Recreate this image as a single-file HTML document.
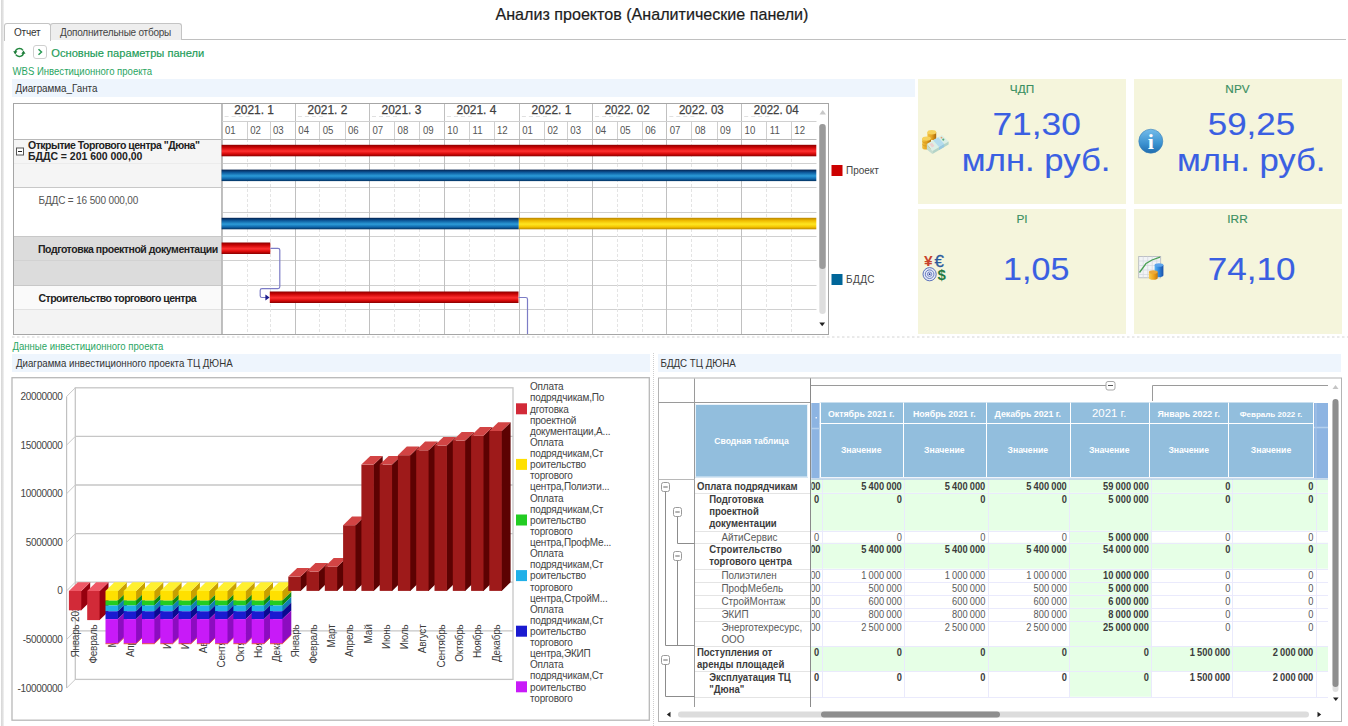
<!DOCTYPE html>
<html><head><meta charset="utf-8"><title>Анализ проектов</title>
<style>
html,body{margin:0;padding:0;}
body{width:1348px;height:726px;position:relative;overflow:hidden;background:#fff;font-family:"Liberation Sans",sans-serif;color:#333;}
.abs{position:absolute;}
.t{position:absolute;white-space:nowrap;line-height:1;}
.grn{color:#2da565;}
.bar{position:absolute;background:#eef5fd;}
.card{position:absolute;background:#f5f5dc;}
.kv{position:absolute;white-space:nowrap;color:#3b5fe0;text-align:center;line-height:1;}
.kl{position:absolute;white-space:nowrap;color:#3a8f62;font-size:11.8px;line-height:1;text-align:center;-webkit-text-stroke:0.15px #3a8f62;}
svg{position:absolute;left:0;top:0;overflow:visible;}
svg text{font-family:"Liberation Sans",sans-serif;}
</style></head><body>

<div class="abs" style="left:1px;top:0;width:3px;height:726px;background:linear-gradient(90deg,#d6d6d6,#e2e2e2 60%,#f4f4f4);"></div>
<div class="t" style="left:495px;top:5.5px;width:314px;text-align:center;font-size:16.1px;color:#1c1c1c;-webkit-text-stroke:0.2px #1c1c1c;">Анализ проектов (Аналитические панели)</div>
<div class="abs" style="left:4px;top:39px;width:1342px;height:1.3px;background:#c0c0c0;"></div>
<div class="abs" style="left:50px;top:23px;width:130px;height:16px;background:#eeeeee;border:1px solid #c4c4c4;border-bottom:none;border-radius:3px 3px 0 0;"></div>
<div class="abs" style="left:4px;top:22.5px;width:45px;height:17.5px;background:#fff;border:1px solid #c4c4c4;border-bottom:none;border-radius:3px 3px 0 0;"></div>
<div class="t" style="left:14px;top:28px;font-size:10px;color:#333;letter-spacing:-0.2px;">Отчет</div>
<div class="t" style="left:60px;top:28px;font-size:10px;color:#444;letter-spacing:-0.23px;">Дополнительные отборы</div>
<svg width="60" height="20" style="left:10px;top:42px;">
  <g fill="none" stroke="#23873f" stroke-width="1.5">
    <path d="M5.3 10 A4.1 3.7 0 0 1 12.9 8.3"/>
    <path d="M13.4 11 A4.1 3.7 0 0 1 5.8 12.7"/>
  </g>
  <path d="M3.2 9.2 L7.4 9.2 L5.2 12.4 Z" fill="#1c7a38"/>
  <path d="M11.3 11.8 L15.5 11.8 L13.5 8.6 Z" fill="#1c7a38"/>
  <rect x="23.5" y="3.5" width="13" height="13" rx="2.5" fill="#fff" stroke="#cfcfcf"/>
  <path d="M28.5 7.2 L31.5 10 L28.5 12.8" fill="none" stroke="#2a9a55" stroke-width="1.5"/>
</svg>
<div class="bar" style="left:12px;top:79px;width:903px;height:18.4px;"></div>
<svg width="1348" height="726">
<defs><linearGradient id="gr" x1="0" y1="0" x2="0" y2="1"><stop offset="0" stop-color="#8a0000"/><stop offset="0.22" stop-color="#c80404"/><stop offset="0.55" stop-color="#ff3030"/><stop offset="0.8" stop-color="#d40808"/><stop offset="1" stop-color="#860000"/></linearGradient><linearGradient id="gb" x1="0" y1="0" x2="0" y2="1"><stop offset="0" stop-color="#03204e"/><stop offset="0.25" stop-color="#0d5a9c"/><stop offset="0.55" stop-color="#2b9bd8"/><stop offset="0.8" stop-color="#0f68ad"/><stop offset="1" stop-color="#03305e"/></linearGradient><linearGradient id="gy" x1="0" y1="0" x2="0" y2="1"><stop offset="0" stop-color="#b88400"/><stop offset="0.25" stop-color="#f0bc00"/><stop offset="0.55" stop-color="#ffe620"/><stop offset="0.8" stop-color="#f5c400"/><stop offset="1" stop-color="#b88400"/></linearGradient></defs>
<rect x="13" y="139" width="208.5" height="48.5" fill="#f5f5f5"/>
<rect x="13" y="236.5" width="208.5" height="49" fill="#dcdcdc"/>
<rect x="13" y="286" width="208.5" height="24" fill="#fafafa"/><rect x="13" y="310" width="208.5" height="24" fill="#f3f3f3"/>
<line x1="221.6" y1="163.5" x2="816.5" y2="163.5" stroke="#d0d0d0" stroke-width="1"/>
<line x1="221.6" y1="187.5" x2="816.5" y2="187.5" stroke="#d0d0d0" stroke-width="1"/>
<line x1="221.6" y1="212.5" x2="816.5" y2="212.5" stroke="#d0d0d0" stroke-width="1"/>
<line x1="221.6" y1="236.5" x2="816.5" y2="236.5" stroke="#d0d0d0" stroke-width="1"/>
<line x1="221.6" y1="260.5" x2="816.5" y2="260.5" stroke="#d0d0d0" stroke-width="1"/>
<line x1="221.6" y1="285.5" x2="816.5" y2="285.5" stroke="#d0d0d0" stroke-width="1"/>
<line x1="221.6" y1="309.5" x2="816.5" y2="309.5" stroke="#d0d0d0" stroke-width="1"/>
<line x1="13" y1="187.5" x2="221.5" y2="187.5" stroke="#c8c8c8"/>
<line x1="13" y1="236.5" x2="221.5" y2="236.5" stroke="#c8c8c8"/>
<line x1="13" y1="285.5" x2="221.5" y2="285.5" stroke="#c8c8c8"/>
<line x1="13" y1="163.5" x2="221.5" y2="163.5" stroke="#ececec"/>
<line x1="13" y1="260.5" x2="221.5" y2="260.5" stroke="#d2d2d2"/>
<line x1="13" y1="309.5" x2="221.5" y2="309.5" stroke="#e2e2e2"/>
<line x1="222.5" y1="103" x2="222.5" y2="334" stroke="#c0c0c0"/>
<line x1="247.5" y1="121" x2="247.5" y2="139" stroke="#cfcfcf"/>
<line x1="247.5" y1="139" x2="247.5" y2="334" stroke="#e4e4e4" stroke-dasharray="3 2"/>
<line x1="270.5" y1="121" x2="270.5" y2="139" stroke="#cfcfcf"/>
<line x1="270.5" y1="139" x2="270.5" y2="334" stroke="#e4e4e4" stroke-dasharray="3 2"/>
<line x1="295.5" y1="103" x2="295.5" y2="334" stroke="#c0c0c0"/>
<line x1="319.5" y1="121" x2="319.5" y2="139" stroke="#cfcfcf"/>
<line x1="319.5" y1="139" x2="319.5" y2="334" stroke="#e4e4e4" stroke-dasharray="3 2"/>
<line x1="345.5" y1="121" x2="345.5" y2="139" stroke="#cfcfcf"/>
<line x1="345.5" y1="139" x2="345.5" y2="334" stroke="#e4e4e4" stroke-dasharray="3 2"/>
<line x1="369.5" y1="103" x2="369.5" y2="334" stroke="#c0c0c0"/>
<line x1="394.5" y1="121" x2="394.5" y2="139" stroke="#cfcfcf"/>
<line x1="394.5" y1="139" x2="394.5" y2="334" stroke="#e4e4e4" stroke-dasharray="3 2"/>
<line x1="419.5" y1="121" x2="419.5" y2="139" stroke="#cfcfcf"/>
<line x1="419.5" y1="139" x2="419.5" y2="334" stroke="#e4e4e4" stroke-dasharray="3 2"/>
<line x1="444.5" y1="103" x2="444.5" y2="334" stroke="#c0c0c0"/>
<line x1="469.5" y1="121" x2="469.5" y2="139" stroke="#cfcfcf"/>
<line x1="469.5" y1="139" x2="469.5" y2="334" stroke="#e4e4e4" stroke-dasharray="3 2"/>
<line x1="494.5" y1="121" x2="494.5" y2="139" stroke="#cfcfcf"/>
<line x1="494.5" y1="139" x2="494.5" y2="334" stroke="#e4e4e4" stroke-dasharray="3 2"/>
<line x1="519.5" y1="103" x2="519.5" y2="334" stroke="#c0c0c0"/>
<line x1="544.5" y1="121" x2="544.5" y2="139" stroke="#cfcfcf"/>
<line x1="544.5" y1="139" x2="544.5" y2="334" stroke="#e4e4e4" stroke-dasharray="3 2"/>
<line x1="567.5" y1="121" x2="567.5" y2="139" stroke="#cfcfcf"/>
<line x1="567.5" y1="139" x2="567.5" y2="334" stroke="#e4e4e4" stroke-dasharray="3 2"/>
<line x1="592.5" y1="103" x2="592.5" y2="334" stroke="#c0c0c0"/>
<line x1="617.5" y1="121" x2="617.5" y2="139" stroke="#cfcfcf"/>
<line x1="617.5" y1="139" x2="617.5" y2="334" stroke="#e4e4e4" stroke-dasharray="3 2"/>
<line x1="642.5" y1="121" x2="642.5" y2="139" stroke="#cfcfcf"/>
<line x1="642.5" y1="139" x2="642.5" y2="334" stroke="#e4e4e4" stroke-dasharray="3 2"/>
<line x1="666.5" y1="103" x2="666.5" y2="334" stroke="#c0c0c0"/>
<line x1="691.5" y1="121" x2="691.5" y2="139" stroke="#cfcfcf"/>
<line x1="691.5" y1="139" x2="691.5" y2="334" stroke="#e4e4e4" stroke-dasharray="3 2"/>
<line x1="717.5" y1="121" x2="717.5" y2="139" stroke="#cfcfcf"/>
<line x1="717.5" y1="139" x2="717.5" y2="334" stroke="#e4e4e4" stroke-dasharray="3 2"/>
<line x1="741.5" y1="103" x2="741.5" y2="334" stroke="#c0c0c0"/>
<line x1="766.5" y1="121" x2="766.5" y2="139" stroke="#cfcfcf"/>
<line x1="766.5" y1="139" x2="766.5" y2="334" stroke="#e4e4e4" stroke-dasharray="3 2"/>
<line x1="791.5" y1="121" x2="791.5" y2="139" stroke="#cfcfcf"/>
<line x1="791.5" y1="139" x2="791.5" y2="334" stroke="#e4e4e4" stroke-dasharray="3 2"/>
<line x1="221.5" y1="121.5" x2="816.5" y2="121.5" stroke="#d0d0d0"/>
<line x1="13" y1="139.5" x2="816.5" y2="139.5" stroke="#b8b8b8"/>
<rect x="221.0" y="103.5" width="1" height="231" fill="#bdbdbd"/>
<text x="234.2" y="114.2" font-size="12" fill="#404040" stroke="#404040" stroke-width="0.25" textLength="39.8" lengthAdjust="spacingAndGlyphs">2021. 1</text>
<line x1="224.6" y1="116.5" x2="251.6" y2="116.5" stroke="#e0e0e0" stroke-dasharray="4 3"/>
<text x="307.5" y="114.2" font-size="12" fill="#404040" stroke="#404040" stroke-width="0.25" textLength="39.8" lengthAdjust="spacingAndGlyphs">2021. 2</text>
<line x1="297.9" y1="116.5" x2="324.9" y2="116.5" stroke="#e0e0e0" stroke-dasharray="4 3"/>
<text x="381.6" y="114.2" font-size="12" fill="#404040" stroke="#404040" stroke-width="0.25" textLength="39.8" lengthAdjust="spacingAndGlyphs">2021. 3</text>
<line x1="372.0" y1="116.5" x2="399.0" y2="116.5" stroke="#e0e0e0" stroke-dasharray="4 3"/>
<text x="456.5" y="114.2" font-size="12" fill="#404040" stroke="#404040" stroke-width="0.25" textLength="39.8" lengthAdjust="spacingAndGlyphs">2021. 4</text>
<line x1="446.9" y1="116.5" x2="473.9" y2="116.5" stroke="#e0e0e0" stroke-dasharray="4 3"/>
<text x="531.5" y="114.2" font-size="12" fill="#404040" stroke="#404040" stroke-width="0.25" textLength="39.8" lengthAdjust="spacingAndGlyphs">2022. 1</text>
<line x1="521.9" y1="116.5" x2="548.9" y2="116.5" stroke="#e0e0e0" stroke-dasharray="4 3"/>
<text x="604.7" y="114.2" font-size="12" fill="#404040" stroke="#404040" stroke-width="0.25" textLength="44.9" lengthAdjust="spacingAndGlyphs">2022. 02</text>
<line x1="595.1" y1="116.5" x2="622.1" y2="116.5" stroke="#e0e0e0" stroke-dasharray="4 3"/>
<text x="678.9" y="114.2" font-size="12" fill="#404040" stroke="#404040" stroke-width="0.25" textLength="44.9" lengthAdjust="spacingAndGlyphs">2022. 03</text>
<line x1="669.3" y1="116.5" x2="696.3" y2="116.5" stroke="#e0e0e0" stroke-dasharray="4 3"/>
<text x="753.8" y="114.2" font-size="12" fill="#404040" stroke="#404040" stroke-width="0.25" textLength="44.9" lengthAdjust="spacingAndGlyphs">2022. 04</text>
<line x1="744.2" y1="116.5" x2="771.2" y2="116.5" stroke="#e0e0e0" stroke-dasharray="4 3"/>
<text transform="translate(225.0,133.7) scale(0.86,1)" font-size="11.2" fill="#555">01</text>
<text transform="translate(250.2,133.7) scale(0.86,1)" font-size="11.2" fill="#555">02</text>
<text transform="translate(273.0,133.7) scale(0.86,1)" font-size="11.2" fill="#555">03</text>
<text transform="translate(298.3,133.7) scale(0.86,1)" font-size="11.2" fill="#555">04</text>
<text transform="translate(322.7,133.7) scale(0.86,1)" font-size="11.2" fill="#555">05</text>
<text transform="translate(348.0,133.7) scale(0.86,1)" font-size="11.2" fill="#555">06</text>
<text transform="translate(372.4,133.7) scale(0.86,1)" font-size="11.2" fill="#555">07</text>
<text transform="translate(397.6,133.7) scale(0.86,1)" font-size="11.2" fill="#555">08</text>
<text transform="translate(422.9,133.7) scale(0.86,1)" font-size="11.2" fill="#555">09</text>
<text transform="translate(447.3,133.7) scale(0.86,1)" font-size="11.2" fill="#555">10</text>
<text transform="translate(472.6,133.7) scale(0.86,1)" font-size="11.2" fill="#555">11</text>
<text transform="translate(497.0,133.7) scale(0.86,1)" font-size="11.2" fill="#555">12</text>
<text transform="translate(522.2,133.7) scale(0.86,1)" font-size="11.2" fill="#555">01</text>
<text transform="translate(547.5,133.7) scale(0.86,1)" font-size="11.2" fill="#555">02</text>
<text transform="translate(570.3,133.7) scale(0.86,1)" font-size="11.2" fill="#555">03</text>
<text transform="translate(595.5,133.7) scale(0.86,1)" font-size="11.2" fill="#555">04</text>
<text transform="translate(620.0,133.7) scale(0.86,1)" font-size="11.2" fill="#555">05</text>
<text transform="translate(645.2,133.7) scale(0.86,1)" font-size="11.2" fill="#555">06</text>
<text transform="translate(669.7,133.7) scale(0.86,1)" font-size="11.2" fill="#555">07</text>
<text transform="translate(694.9,133.7) scale(0.86,1)" font-size="11.2" fill="#555">08</text>
<text transform="translate(720.1,133.7) scale(0.86,1)" font-size="11.2" fill="#555">09</text>
<text transform="translate(744.6,133.7) scale(0.86,1)" font-size="11.2" fill="#555">10</text>
<text transform="translate(769.8,133.7) scale(0.86,1)" font-size="11.2" fill="#555">11</text>
<text transform="translate(794.3,133.7) scale(0.86,1)" font-size="11.2" fill="#555">12</text>
<rect x="221.6" y="144.8" width="594.7" height="11.5" fill="url(#gr)"/>
<rect x="221.6" y="169.6" width="594.7" height="11.5" fill="url(#gb)"/>
<rect x="221.6" y="217.8" width="297.2" height="11.5" fill="url(#gb)"/>
<rect x="518.8" y="217.8" width="297.5" height="11.5" fill="url(#gy)"/>
<rect x="221.6" y="242.5" width="48.7" height="11.5" fill="url(#gr)"/>
<rect x="269.8" y="291.5" width="248.7" height="11.5" fill="url(#gr)"/>
<path d="M270.3 248.3 H278 Q279.8 248.3 279.8 250 V286.8 Q279.8 288.6 278 288.6 H262 Q260.2 288.6 260.2 290.4 V295.7 Q260.2 297.5 262 297.5 H266" fill="none" stroke="#7c7cc6" stroke-width="1.2"/>
<path d="M265.4 294.6 L269.6 297.5 L265.4 300.4 Z" fill="#1c1c8c"/>
<path d="M518.5 297.5 H525.7 Q527.5 297.5 527.5 299.3 V334" fill="none" stroke="#7c7cc6" stroke-width="1.2"/>
<rect x="13.5" y="103.5" width="815" height="231" fill="none" stroke="#a6a6a6"/>
<rect x="819.3" y="124" width="6.4" height="190" rx="3.2" fill="#dedede"/>
<rect x="819.3" y="124" width="6.4" height="145" rx="3.2" fill="#9a9a9a"/>
<path d="M819.5 114.5 L822.7 110 L826 114.5 Z" fill="#c8c8c8"/>
<path d="M819.3 322.5 L825.1 322.5 L822.2 326.3 Z" fill="#222"/>
<rect x="16.5" y="148" width="7" height="7" fill="#fff" stroke="#555"/>
<line x1="18" y1="151.5" x2="22" y2="151.5" stroke="#222" stroke-width="1"/>
<rect x="831.5" y="165" width="11" height="11" fill="#cc0000"/>
<rect x="831.5" y="274" width="11" height="11" fill="#006699"/>
</svg>
<div class="t" style="left:28px;top:140px;font-size:10.5px;font-weight:bold;color:#222;letter-spacing:-0.5px;line-height:11px;">Открытие Торгового центра "Дюна"<br><span style="letter-spacing:-0.03px">БДДС = 201 600 000,00</span></div>
<div class="t" style="left:38.5px;top:195.5px;font-size:10px;color:#555;letter-spacing:-0.15px;">БДДС = 16 500 000,00</div>
<div class="t" style="left:38px;top:244px;font-size:10.5px;font-weight:bold;color:#222;letter-spacing:-0.45px;">Подготовка проектной документации</div>
<div class="t" style="left:38.5px;top:293px;font-size:10.5px;font-weight:bold;color:#222;letter-spacing:-0.53px;">Строительство торгового центра</div>
<div class="t" style="left:846px;top:166px;font-size:10px;color:#444;letter-spacing:0px;">Проект</div>
<div class="t" style="left:846px;top:275px;font-size:10px;color:#444;letter-spacing:0.4px;">БДДС</div>

<div class="card" style="left:918px;top:79px;width:208px;height:124.5px;"></div>
<div class="card" style="left:1133.5px;top:79px;width:208px;height:124.5px;"></div>
<div class="card" style="left:918px;top:209px;width:208px;height:124.5px;"></div>
<div class="card" style="left:1133.5px;top:209px;width:208px;height:124.5px;"></div>
<div class="kl" style="left:972px;width:100px;top:84.2px;">ЧДП</div>
<div class="kl" style="left:1187.5px;width:100px;top:84.2px;">NPV</div>
<div class="kl" style="left:972px;width:100px;top:214.1px;">PI</div>
<div class="kl" style="left:1187.5px;width:100px;top:214.1px;">IRR</div>
<svg width="1348" height="726">
<g fill="#3a5fe2" stroke="#3a5fe2" stroke-width="0.12" font-size="31.4" text-anchor="middle">
  <text transform="translate(1036.6,135) scale(1.125,1)">71,30</text>
  <text transform="translate(1036.1,171.2) scale(1.104,1)">млн. руб.</text>
  <text transform="translate(1251.4,135) scale(1.112,1)">59,25</text>
  <text transform="translate(1251.2,171.2) scale(1.104,1)">млн. руб.</text>
  <text transform="translate(1036.2,279.8) scale(1.085,1)">1,05</text>
  <text transform="translate(1251.6,279.8) scale(1.118,1)">74,10</text>
</g>
<!-- money icon -->
<defs>
<linearGradient id="gold" x1="0" y1="0" x2="1" y2="0"><stop offset="0" stop-color="#f0c040"/><stop offset="0.5" stop-color="#e4a422"/><stop offset="1" stop-color="#a8660a"/></linearGradient>
</defs>
<g>
  <!-- back coin stack -->
  <path d="M927.4 132.3 V140 H936.2 V132.3 Z" fill="url(#gold)"/>
  <ellipse cx="931.8" cy="132.3" rx="4.4" ry="2.2" fill="#f6d25c"/>
  <!-- front coin stack -->
  <path d="M922.2 138.6 V147.4 A4.4 2.2 0 0 0 931 147.4 V138.6 Z" fill="url(#gold)"/>
  <ellipse cx="926.6" cy="138.6" rx="4.4" ry="2.2" fill="#f6d25c"/>
  <path d="M922.4 141.5 A4.4 2.2 0 0 0 930.8 141.5 M922.4 144.5 A4.4 2.2 0 0 0 930.8 144.5" fill="none" stroke="#c88c18" stroke-width="0.5"/>
  <!-- banknotes -->
  <path d="M926.8 144 L942 135 L948.6 141.4 L932.4 151 Z" fill="#dcefe6"/>
  <path d="M926.8 144 L932.4 151 V154 L926.8 149.4 Z" fill="#c4dcd0"/>
  <path d="M932.4 151 L948.6 141.4 V144.4 L932.4 154 Z" fill="#b4d4c8"/>
  <path d="M933.2 140.2 L938.2 137.2 L944.2 144 L939 147.1 Z" fill="#b4dcee"/>
  <path d="M939 147.1 L944.2 144 V147 L939 150.1 Z" fill="#98c8e0"/>
  <path d="M929.5 144.2 L932 142.8 L934.5 146 L932 147.5 Z" fill="#ecd0d0"/>
  <circle cx="943.3" cy="139.6" r="1.1" fill="#58a878"/>
  <circle cx="941.5" cy="137.6" r="0.9" fill="#e0a070"/>
</g>
<!-- info icon -->
<defs><linearGradient id="ig" x1="0" y1="0" x2="0" y2="1"><stop offset="0" stop-color="#74bcea"/><stop offset="0.6" stop-color="#3c92d0"/><stop offset="1" stop-color="#1f6cae"/></linearGradient></defs>
<circle cx="1150.8" cy="141.2" r="12" fill="url(#ig)" stroke="#3a80b8" stroke-width="0.6"/>
<text x="1150.9" y="149.2" style="font-family:'Liberation Serif',serif;font-weight:bold" font-size="22" fill="#fff" text-anchor="middle">i</text>
<!-- currency icon -->
<g font-family="Liberation Sans" font-weight="bold">
  <text x="924" y="265.9" font-size="15.5" fill="#c8422c">¥</text>
  <text x="934.4" y="266.6" font-size="17" font-weight="normal" stroke="#2a5a9c" stroke-width="0.3" fill="#2a5a9c">€</text>
  <text x="937.6" y="280.2" font-size="15" fill="#1f7a42">$</text>
</g>
<circle cx="929.6" cy="274.2" r="6.6" fill="#e4e9f6" stroke="#4a62b4" stroke-width="0.9"/>
<circle cx="929.6" cy="274.2" r="4.3" fill="none" stroke="#4a62b4" stroke-width="0.8"/>
<circle cx="929.6" cy="274.2" r="2.2" fill="none" stroke="#4a62b4" stroke-width="0.7"/>
<circle cx="929.6" cy="274.2" r="0.9" fill="#2a3c94"/>
<!-- chart icon -->
<defs>
<linearGradient id="cyb" x1="0" y1="0" x2="1" y2="0"><stop offset="0" stop-color="#5cb4f0"/><stop offset="0.5" stop-color="#2e84dc"/><stop offset="1" stop-color="#1a50a8"/></linearGradient>
<linearGradient id="cyy" x1="0" y1="0" x2="1" y2="0"><stop offset="0" stop-color="#f8cc50"/><stop offset="0.5" stop-color="#f0a820"/><stop offset="1" stop-color="#c87808"/></linearGradient>
</defs>
<g>
  <rect x="1138.7" y="256.5" width="22" height="21.3" fill="#f2f4f6" stroke="#b0b4bc" stroke-width="0.8"/>
  <path d="M1138.7 261 H1160.7 M1138.7 265.5 H1160.7 M1138.7 270 H1160.7 M1138.7 274.5 H1160.7 M1143.2 256.5 V277.8 M1147.7 256.5 V277.8 M1152.2 256.5 V277.8 M1156.7 256.5 V277.8" stroke="#d4d8e0" stroke-width="0.7"/>
  <path d="M1139.5 272.5 L1146 263.5 L1152 260 L1160 257.2" fill="none" stroke="#4aa052" stroke-width="1.3"/>
  <!-- blue cylinder -->
  <path d="M1154.6 265 V275.2 A4.4 1.8 0 0 0 1163.4 275.2 V265 Z" fill="url(#cyb)"/>
  <ellipse cx="1159" cy="265" rx="4.4" ry="1.8" fill="#5ca4ec"/>
  <!-- yellow cylinder -->
  <path d="M1148.9 272 V277.9 A4.4 1.8 0 0 0 1157.7 277.9 V272 Z" fill="url(#cyy)"/>
  <ellipse cx="1153.3" cy="272" rx="4.4" ry="1.8" fill="#eca838"/>
</g>
</svg>

<svg width="1348" height="726"><line x1="12" y1="337" x2="1348" y2="337" stroke="#d4d4d4" stroke-dasharray="2.5 2.5"/></svg>
<div class="bar" style="left:12px;top:354px;width:638px;height:18px;"></div>
<div class="abs" style="left:653px;top:353px;width:0;height:373px;border-left:1px dotted #cfcfcf;"></div>
<div class="bar" style="left:657.5px;top:354px;width:683px;height:18px;"></div>

<svg width="1348" height="726">
<g font-size="11.4">
<text transform="translate(51.3,56.8) scale(0.975,1)" fill="#229c58" stroke="#229c58" stroke-width="0.18">Основные параметры панели</text>
</g>
<g fill="#2aa562">
<text transform="translate(12.5,74.8) scale(0.87,1)" font-size="11">WBS Инвестиционного проекта</text>
<text transform="translate(12.5,349.6) scale(0.87,1)" font-size="11">Данные инвестиционного проекта</text>
</g>
<g fill="#333">
<text transform="translate(15.5,92.3) scale(0.885,1)" font-size="11.1">Диаграмма_Ганта</text>
<text transform="translate(16,366.9) scale(0.875,1)" font-size="11.1">Диаграмма инвестиционного проекта ТЦ ДЮНА</text>
<text transform="translate(660.5,366.7) scale(0.88,1)" font-size="11.1">БДДС ТЦ ДЮНА</text>
</g>
</svg>
<svg width="1348" height="726">
<rect x="12" y="377.7" width="637.3" height="342.5" fill="#fff" stroke="#b8b8b8" stroke-width="1.3"/>
<rect x="75.3" y="387.8" width="437.7" height="291.6" fill="#fff" stroke="#c6c6c6" stroke-width="1.3"/>
<line x1="75.3" y1="436.4" x2="513.0" y2="436.4" stroke="#c6c6c6" stroke-width="1.3"/>
<line x1="75.3" y1="485.0" x2="513.0" y2="485.0" stroke="#c6c6c6" stroke-width="1.3"/>
<line x1="75.3" y1="533.6" x2="513.0" y2="533.6" stroke="#c6c6c6" stroke-width="1.3"/>
<line x1="75.3" y1="582.2" x2="513.0" y2="582.2" stroke="#c6c6c6" stroke-width="1.3"/>
<line x1="75.3" y1="630.8" x2="513.0" y2="630.8" stroke="#c6c6c6" stroke-width="1.3"/>
<line x1="66.6" y1="396.5" x2="66.6" y2="688.1" stroke="#c0c0c0" stroke-width="1.2"/>
<line x1="66.6" y1="396.5" x2="75.3" y2="387.8" stroke="#c8c8c8"/>
<text x="62.5" y="400.0" font-size="10" fill="#444" text-anchor="end" letter-spacing="-0.3">20000000</text>
<line x1="66.6" y1="445.1" x2="75.3" y2="436.4" stroke="#c8c8c8"/>
<text x="62.5" y="448.6" font-size="10" fill="#444" text-anchor="end" letter-spacing="-0.3">15000000</text>
<line x1="66.6" y1="493.7" x2="75.3" y2="485.0" stroke="#c8c8c8"/>
<text x="62.5" y="497.2" font-size="10" fill="#444" text-anchor="end" letter-spacing="-0.3">10000000</text>
<line x1="66.6" y1="542.3" x2="75.3" y2="533.6" stroke="#c8c8c8"/>
<text x="62.5" y="545.8" font-size="10" fill="#444" text-anchor="end" letter-spacing="-0.3">5000000</text>
<line x1="66.6" y1="590.9" x2="75.3" y2="582.2" stroke="#c8c8c8"/>
<text x="62.5" y="594.4" font-size="10" fill="#444" text-anchor="end" letter-spacing="-0.3">0</text>
<line x1="66.6" y1="639.5" x2="75.3" y2="630.8" stroke="#c8c8c8"/>
<text x="62.5" y="643.0" font-size="10" fill="#444" text-anchor="end" letter-spacing="-0.3">-5000000</text>
<line x1="66.6" y1="688.1" x2="75.3" y2="679.4" stroke="#c8c8c8"/>
<text x="62.5" y="691.6" font-size="10" fill="#444" text-anchor="end" letter-spacing="-0.3">-10000000</text>
<text transform="translate(79.1,624.5) rotate(-90)" font-size="10" fill="#3c3c3c" text-anchor="end" letter-spacing="-0.22">Январь</text>
<text transform="translate(79.1,624.5) rotate(-90)" font-size="10" fill="#3c3c3c" text-anchor="start" letter-spacing="-0.22">&#160;2021</text>
<text transform="translate(97.4,624.5) rotate(-90)" font-size="10" fill="#3c3c3c" text-anchor="end" letter-spacing="-0.22">Февраль</text>
<text transform="translate(115.7,624.5) rotate(-90)" font-size="10" fill="#3c3c3c" text-anchor="end" letter-spacing="-0.22">Март</text>
<text transform="translate(133.9,624.5) rotate(-90)" font-size="10" fill="#3c3c3c" text-anchor="end" letter-spacing="-0.22">Апрель</text>
<text transform="translate(152.2,624.5) rotate(-90)" font-size="10" fill="#3c3c3c" text-anchor="end" letter-spacing="-0.22">Май</text>
<text transform="translate(170.5,624.5) rotate(-90)" font-size="10" fill="#3c3c3c" text-anchor="end" letter-spacing="-0.22">Июнь</text>
<text transform="translate(188.8,624.5) rotate(-90)" font-size="10" fill="#3c3c3c" text-anchor="end" letter-spacing="-0.22">Июль</text>
<text transform="translate(207.1,624.5) rotate(-90)" font-size="10" fill="#3c3c3c" text-anchor="end" letter-spacing="-0.22">Август</text>
<text transform="translate(225.3,624.5) rotate(-90)" font-size="10" fill="#3c3c3c" text-anchor="end" letter-spacing="-0.22">Сентябрь</text>
<text transform="translate(243.6,624.5) rotate(-90)" font-size="10" fill="#3c3c3c" text-anchor="end" letter-spacing="-0.22">Октябрь</text>
<text transform="translate(261.9,624.5) rotate(-90)" font-size="10" fill="#3c3c3c" text-anchor="end" letter-spacing="-0.22">Ноябрь</text>
<text transform="translate(280.2,624.5) rotate(-90)" font-size="10" fill="#3c3c3c" text-anchor="end" letter-spacing="-0.22">Декабрь</text>
<text transform="translate(298.5,624.5) rotate(-90)" font-size="10" fill="#3c3c3c" text-anchor="end" letter-spacing="-0.22">Январь</text>
<clipPath id="sl"><rect x="292" y="590" width="2.6" height="32"/></clipPath>
<g clip-path="url(#sl)"><text transform="translate(294.6,593.5) rotate(-90)" font-size="10.5" fill="#777" text-anchor="start" letter-spacing="-0.25">&#160;2022</text></g>
<text transform="translate(316.7,624.5) rotate(-90)" font-size="10" fill="#3c3c3c" text-anchor="end" letter-spacing="-0.22">Февраль</text>
<text transform="translate(335.0,624.5) rotate(-90)" font-size="10" fill="#3c3c3c" text-anchor="end" letter-spacing="-0.22">Март</text>
<text transform="translate(353.3,624.5) rotate(-90)" font-size="10" fill="#3c3c3c" text-anchor="end" letter-spacing="-0.22">Апрель</text>
<text transform="translate(371.6,624.5) rotate(-90)" font-size="10" fill="#3c3c3c" text-anchor="end" letter-spacing="-0.22">Май</text>
<text transform="translate(389.9,624.5) rotate(-90)" font-size="10" fill="#3c3c3c" text-anchor="end" letter-spacing="-0.22">Июнь</text>
<text transform="translate(408.1,624.5) rotate(-90)" font-size="10" fill="#3c3c3c" text-anchor="end" letter-spacing="-0.22">Июль</text>
<text transform="translate(426.4,624.5) rotate(-90)" font-size="10" fill="#3c3c3c" text-anchor="end" letter-spacing="-0.22">Август</text>
<text transform="translate(444.7,624.5) rotate(-90)" font-size="10" fill="#3c3c3c" text-anchor="end" letter-spacing="-0.22">Сентябрь</text>
<text transform="translate(463.0,624.5) rotate(-90)" font-size="10" fill="#3c3c3c" text-anchor="end" letter-spacing="-0.22">Октябрь</text>
<text transform="translate(481.3,624.5) rotate(-90)" font-size="10" fill="#3c3c3c" text-anchor="end" letter-spacing="-0.22">Ноябрь</text>
<text transform="translate(499.5,624.5) rotate(-90)" font-size="10" fill="#3c3c3c" text-anchor="end" letter-spacing="-0.22">Декабрь</text>
<path d="M80.7 590.9 L81.3 590.9 L90.2 582.2 L90.2 601.6 L81.3 610.3 L80.7 610.3 Z" fill="#96000e"/>
<rect x="68.9" y="590.9" width="12.4" height="19.4" fill="#d22a38"/>
<path d="M68.9 590.9 L77.8 582.2 L90.2 582.2 L81.3 590.9 Z" fill="#ef5866"/>
<path d="M99.0 590.9 L99.6 590.9 L108.5 582.2 L108.5 611.4 L99.6 620.1 L99.0 620.1 Z" fill="#96000e"/>
<rect x="87.2" y="590.9" width="12.4" height="29.2" fill="#d22a38"/>
<path d="M87.2 590.9 L96.1 582.2 L108.5 582.2 L99.6 590.9 Z" fill="#ef5866"/>
<path d="M117.3 590.9 L117.9 590.9 L126.8 582.2 L126.8 591.9 L117.9 600.6 L117.3 600.6 Z" fill="#c8a000"/>
<rect x="105.5" y="590.9" width="12.4" height="9.7" fill="#ffe000"/>
<path d="M105.5 590.9 L114.4 582.2 L126.8 582.2 L117.9 590.9 Z" fill="#fff030"/>
<path d="M117.3 600.6 L117.9 600.6 L126.8 591.9 L126.8 596.8 L117.9 605.5 L117.3 605.5 Z" fill="#108c10"/>
<rect x="105.5" y="600.6" width="12.4" height="4.9" fill="#22cc22"/>
<path d="M117.3 605.5 L117.9 605.5 L126.8 596.8 L126.8 602.6 L117.9 611.3 L117.3 611.3 Z" fill="#1080b0"/>
<rect x="105.5" y="605.5" width="12.4" height="5.8" fill="#20b0e8"/>
<path d="M117.3 611.3 L117.9 611.3 L126.8 602.6 L126.8 610.4 L117.9 619.1 L117.3 619.1 Z" fill="#0a0a90"/>
<rect x="105.5" y="611.3" width="12.4" height="7.8" fill="#1a1ad0"/>
<path d="M117.3 619.1 L117.9 619.1 L126.8 610.4 L126.8 634.7 L117.9 643.4 L117.3 643.4 Z" fill="#8c0cc0"/>
<rect x="105.5" y="619.1" width="12.4" height="24.3" fill="#c81af8"/>
<path d="M105.5 643.7 H117.9 L126.8 635.0" fill="none" stroke="#e23a3a" stroke-width="0.9"/>
<path d="M135.5 590.9 L136.1 590.9 L145.0 582.2 L145.0 591.9 L136.1 600.6 L135.5 600.6 Z" fill="#c8a000"/>
<rect x="123.7" y="590.9" width="12.4" height="9.7" fill="#ffe000"/>
<path d="M123.7 590.9 L132.6 582.2 L145.0 582.2 L136.1 590.9 Z" fill="#fff030"/>
<path d="M135.5 600.6 L136.1 600.6 L145.0 591.9 L145.0 596.8 L136.1 605.5 L135.5 605.5 Z" fill="#108c10"/>
<rect x="123.7" y="600.6" width="12.4" height="4.9" fill="#22cc22"/>
<path d="M135.5 605.5 L136.1 605.5 L145.0 596.8 L145.0 602.6 L136.1 611.3 L135.5 611.3 Z" fill="#1080b0"/>
<rect x="123.7" y="605.5" width="12.4" height="5.8" fill="#20b0e8"/>
<path d="M135.5 611.3 L136.1 611.3 L145.0 602.6 L145.0 610.4 L136.1 619.1 L135.5 619.1 Z" fill="#0a0a90"/>
<rect x="123.7" y="611.3" width="12.4" height="7.8" fill="#1a1ad0"/>
<path d="M135.5 619.1 L136.1 619.1 L145.0 610.4 L145.0 634.7 L136.1 643.4 L135.5 643.4 Z" fill="#8c0cc0"/>
<rect x="123.7" y="619.1" width="12.4" height="24.3" fill="#c81af8"/>
<path d="M123.7 643.7 H136.1 L145.0 635.0" fill="none" stroke="#e23a3a" stroke-width="0.9"/>
<path d="M153.8 590.9 L154.4 590.9 L163.3 582.2 L163.3 591.9 L154.4 600.6 L153.8 600.6 Z" fill="#c8a000"/>
<rect x="142.0" y="590.9" width="12.4" height="9.7" fill="#ffe000"/>
<path d="M142.0 590.9 L150.9 582.2 L163.3 582.2 L154.4 590.9 Z" fill="#fff030"/>
<path d="M153.8 600.6 L154.4 600.6 L163.3 591.9 L163.3 596.8 L154.4 605.5 L153.8 605.5 Z" fill="#108c10"/>
<rect x="142.0" y="600.6" width="12.4" height="4.9" fill="#22cc22"/>
<path d="M153.8 605.5 L154.4 605.5 L163.3 596.8 L163.3 602.6 L154.4 611.3 L153.8 611.3 Z" fill="#1080b0"/>
<rect x="142.0" y="605.5" width="12.4" height="5.8" fill="#20b0e8"/>
<path d="M153.8 611.3 L154.4 611.3 L163.3 602.6 L163.3 610.4 L154.4 619.1 L153.8 619.1 Z" fill="#0a0a90"/>
<rect x="142.0" y="611.3" width="12.4" height="7.8" fill="#1a1ad0"/>
<path d="M153.8 619.1 L154.4 619.1 L163.3 610.4 L163.3 634.7 L154.4 643.4 L153.8 643.4 Z" fill="#8c0cc0"/>
<rect x="142.0" y="619.1" width="12.4" height="24.3" fill="#c81af8"/>
<path d="M142.0 643.7 H154.4 L163.3 635.0" fill="none" stroke="#e23a3a" stroke-width="0.9"/>
<path d="M172.1 590.9 L172.7 590.9 L181.6 582.2 L181.6 591.9 L172.7 600.6 L172.1 600.6 Z" fill="#c8a000"/>
<rect x="160.3" y="590.9" width="12.4" height="9.7" fill="#ffe000"/>
<path d="M160.3 590.9 L169.2 582.2 L181.6 582.2 L172.7 590.9 Z" fill="#fff030"/>
<path d="M172.1 600.6 L172.7 600.6 L181.6 591.9 L181.6 596.8 L172.7 605.5 L172.1 605.5 Z" fill="#108c10"/>
<rect x="160.3" y="600.6" width="12.4" height="4.9" fill="#22cc22"/>
<path d="M172.1 605.5 L172.7 605.5 L181.6 596.8 L181.6 602.6 L172.7 611.3 L172.1 611.3 Z" fill="#1080b0"/>
<rect x="160.3" y="605.5" width="12.4" height="5.8" fill="#20b0e8"/>
<path d="M172.1 611.3 L172.7 611.3 L181.6 602.6 L181.6 610.4 L172.7 619.1 L172.1 619.1 Z" fill="#0a0a90"/>
<rect x="160.3" y="611.3" width="12.4" height="7.8" fill="#1a1ad0"/>
<path d="M172.1 619.1 L172.7 619.1 L181.6 610.4 L181.6 634.7 L172.7 643.4 L172.1 643.4 Z" fill="#8c0cc0"/>
<rect x="160.3" y="619.1" width="12.4" height="24.3" fill="#c81af8"/>
<path d="M160.3 643.7 H172.7 L181.6 635.0" fill="none" stroke="#e23a3a" stroke-width="0.9"/>
<path d="M190.4 590.9 L191.0 590.9 L199.9 582.2 L199.9 591.9 L191.0 600.6 L190.4 600.6 Z" fill="#c8a000"/>
<rect x="178.6" y="590.9" width="12.4" height="9.7" fill="#ffe000"/>
<path d="M178.6 590.9 L187.5 582.2 L199.9 582.2 L191.0 590.9 Z" fill="#fff030"/>
<path d="M190.4 600.6 L191.0 600.6 L199.9 591.9 L199.9 596.8 L191.0 605.5 L190.4 605.5 Z" fill="#108c10"/>
<rect x="178.6" y="600.6" width="12.4" height="4.9" fill="#22cc22"/>
<path d="M190.4 605.5 L191.0 605.5 L199.9 596.8 L199.9 602.6 L191.0 611.3 L190.4 611.3 Z" fill="#1080b0"/>
<rect x="178.6" y="605.5" width="12.4" height="5.8" fill="#20b0e8"/>
<path d="M190.4 611.3 L191.0 611.3 L199.9 602.6 L199.9 610.4 L191.0 619.1 L190.4 619.1 Z" fill="#0a0a90"/>
<rect x="178.6" y="611.3" width="12.4" height="7.8" fill="#1a1ad0"/>
<path d="M190.4 619.1 L191.0 619.1 L199.9 610.4 L199.9 634.7 L191.0 643.4 L190.4 643.4 Z" fill="#8c0cc0"/>
<rect x="178.6" y="619.1" width="12.4" height="24.3" fill="#c81af8"/>
<path d="M178.6 643.7 H191.0 L199.9 635.0" fill="none" stroke="#e23a3a" stroke-width="0.9"/>
<path d="M208.7 590.9 L209.3 590.9 L218.2 582.2 L218.2 591.9 L209.3 600.6 L208.7 600.6 Z" fill="#c8a000"/>
<rect x="196.9" y="590.9" width="12.4" height="9.7" fill="#ffe000"/>
<path d="M196.9 590.9 L205.8 582.2 L218.2 582.2 L209.3 590.9 Z" fill="#fff030"/>
<path d="M208.7 600.6 L209.3 600.6 L218.2 591.9 L218.2 596.8 L209.3 605.5 L208.7 605.5 Z" fill="#108c10"/>
<rect x="196.9" y="600.6" width="12.4" height="4.9" fill="#22cc22"/>
<path d="M208.7 605.5 L209.3 605.5 L218.2 596.8 L218.2 602.6 L209.3 611.3 L208.7 611.3 Z" fill="#1080b0"/>
<rect x="196.9" y="605.5" width="12.4" height="5.8" fill="#20b0e8"/>
<path d="M208.7 611.3 L209.3 611.3 L218.2 602.6 L218.2 610.4 L209.3 619.1 L208.7 619.1 Z" fill="#0a0a90"/>
<rect x="196.9" y="611.3" width="12.4" height="7.8" fill="#1a1ad0"/>
<path d="M208.7 619.1 L209.3 619.1 L218.2 610.4 L218.2 634.7 L209.3 643.4 L208.7 643.4 Z" fill="#8c0cc0"/>
<rect x="196.9" y="619.1" width="12.4" height="24.3" fill="#c81af8"/>
<path d="M196.9 643.7 H209.3 L218.2 635.0" fill="none" stroke="#e23a3a" stroke-width="0.9"/>
<path d="M226.9 590.9 L227.5 590.9 L236.4 582.2 L236.4 591.9 L227.5 600.6 L226.9 600.6 Z" fill="#c8a000"/>
<rect x="215.1" y="590.9" width="12.4" height="9.7" fill="#ffe000"/>
<path d="M215.1 590.9 L224.0 582.2 L236.4 582.2 L227.5 590.9 Z" fill="#fff030"/>
<path d="M226.9 600.6 L227.5 600.6 L236.4 591.9 L236.4 596.8 L227.5 605.5 L226.9 605.5 Z" fill="#108c10"/>
<rect x="215.1" y="600.6" width="12.4" height="4.9" fill="#22cc22"/>
<path d="M226.9 605.5 L227.5 605.5 L236.4 596.8 L236.4 602.6 L227.5 611.3 L226.9 611.3 Z" fill="#1080b0"/>
<rect x="215.1" y="605.5" width="12.4" height="5.8" fill="#20b0e8"/>
<path d="M226.9 611.3 L227.5 611.3 L236.4 602.6 L236.4 610.4 L227.5 619.1 L226.9 619.1 Z" fill="#0a0a90"/>
<rect x="215.1" y="611.3" width="12.4" height="7.8" fill="#1a1ad0"/>
<path d="M226.9 619.1 L227.5 619.1 L236.4 610.4 L236.4 634.7 L227.5 643.4 L226.9 643.4 Z" fill="#8c0cc0"/>
<rect x="215.1" y="619.1" width="12.4" height="24.3" fill="#c81af8"/>
<path d="M215.1 643.7 H227.5 L236.4 635.0" fill="none" stroke="#e23a3a" stroke-width="0.9"/>
<path d="M245.2 590.9 L245.8 590.9 L254.7 582.2 L254.7 591.9 L245.8 600.6 L245.2 600.6 Z" fill="#c8a000"/>
<rect x="233.4" y="590.9" width="12.4" height="9.7" fill="#ffe000"/>
<path d="M233.4 590.9 L242.3 582.2 L254.7 582.2 L245.8 590.9 Z" fill="#fff030"/>
<path d="M245.2 600.6 L245.8 600.6 L254.7 591.9 L254.7 596.8 L245.8 605.5 L245.2 605.5 Z" fill="#108c10"/>
<rect x="233.4" y="600.6" width="12.4" height="4.9" fill="#22cc22"/>
<path d="M245.2 605.5 L245.8 605.5 L254.7 596.8 L254.7 602.6 L245.8 611.3 L245.2 611.3 Z" fill="#1080b0"/>
<rect x="233.4" y="605.5" width="12.4" height="5.8" fill="#20b0e8"/>
<path d="M245.2 611.3 L245.8 611.3 L254.7 602.6 L254.7 610.4 L245.8 619.1 L245.2 619.1 Z" fill="#0a0a90"/>
<rect x="233.4" y="611.3" width="12.4" height="7.8" fill="#1a1ad0"/>
<path d="M245.2 619.1 L245.8 619.1 L254.7 610.4 L254.7 634.7 L245.8 643.4 L245.2 643.4 Z" fill="#8c0cc0"/>
<rect x="233.4" y="619.1" width="12.4" height="24.3" fill="#c81af8"/>
<path d="M233.4 643.7 H245.8 L254.7 635.0" fill="none" stroke="#e23a3a" stroke-width="0.9"/>
<path d="M263.5 590.9 L264.1 590.9 L273.0 582.2 L273.0 591.9 L264.1 600.6 L263.5 600.6 Z" fill="#c8a000"/>
<rect x="251.7" y="590.9" width="12.4" height="9.7" fill="#ffe000"/>
<path d="M251.7 590.9 L260.6 582.2 L273.0 582.2 L264.1 590.9 Z" fill="#fff030"/>
<path d="M263.5 600.6 L264.1 600.6 L273.0 591.9 L273.0 596.8 L264.1 605.5 L263.5 605.5 Z" fill="#108c10"/>
<rect x="251.7" y="600.6" width="12.4" height="4.9" fill="#22cc22"/>
<path d="M263.5 605.5 L264.1 605.5 L273.0 596.8 L273.0 602.6 L264.1 611.3 L263.5 611.3 Z" fill="#1080b0"/>
<rect x="251.7" y="605.5" width="12.4" height="5.8" fill="#20b0e8"/>
<path d="M263.5 611.3 L264.1 611.3 L273.0 602.6 L273.0 610.4 L264.1 619.1 L263.5 619.1 Z" fill="#0a0a90"/>
<rect x="251.7" y="611.3" width="12.4" height="7.8" fill="#1a1ad0"/>
<path d="M263.5 619.1 L264.1 619.1 L273.0 610.4 L273.0 634.7 L264.1 643.4 L263.5 643.4 Z" fill="#8c0cc0"/>
<rect x="251.7" y="619.1" width="12.4" height="24.3" fill="#c81af8"/>
<path d="M251.7 643.7 H264.1 L273.0 635.0" fill="none" stroke="#e23a3a" stroke-width="0.9"/>
<path d="M281.8 590.9 L282.4 590.9 L291.3 582.2 L291.3 591.9 L282.4 600.6 L281.8 600.6 Z" fill="#c8a000"/>
<rect x="270.0" y="590.9" width="12.4" height="9.7" fill="#ffe000"/>
<path d="M270.0 590.9 L278.9 582.2 L291.3 582.2 L282.4 590.9 Z" fill="#fff030"/>
<path d="M281.8 600.6 L282.4 600.6 L291.3 591.9 L291.3 596.8 L282.4 605.5 L281.8 605.5 Z" fill="#108c10"/>
<rect x="270.0" y="600.6" width="12.4" height="4.9" fill="#22cc22"/>
<path d="M281.8 605.5 L282.4 605.5 L291.3 596.8 L291.3 602.6 L282.4 611.3 L281.8 611.3 Z" fill="#1080b0"/>
<rect x="270.0" y="605.5" width="12.4" height="5.8" fill="#20b0e8"/>
<path d="M281.8 611.3 L282.4 611.3 L291.3 602.6 L291.3 610.4 L282.4 619.1 L281.8 619.1 Z" fill="#0a0a90"/>
<rect x="270.0" y="611.3" width="12.4" height="7.8" fill="#1a1ad0"/>
<path d="M281.8 619.1 L282.4 619.1 L291.3 610.4 L291.3 634.7 L282.4 643.4 L281.8 643.4 Z" fill="#8c0cc0"/>
<rect x="270.0" y="619.1" width="12.4" height="24.3" fill="#c81af8"/>
<path d="M270.0 643.7 H282.4 L291.3 635.0" fill="none" stroke="#e23a3a" stroke-width="0.9"/>
<path d="M300.1 576.6 L300.7 576.6 L309.6 567.9 L309.6 582.2 L300.7 590.9 L300.1 590.9 Z" fill="#5c0202"/>
<rect x="288.3" y="576.6" width="12.4" height="14.3" fill="#9e1a1a"/>
<path d="M288.3 576.6 L297.2 567.9 L309.6 567.9 L300.7 576.6 Z" fill="#d24444"/>
<path d="M318.3 571.6 L318.9 571.6 L327.8 562.9 L327.8 582.2 L318.9 590.9 L318.3 590.9 Z" fill="#5c0202"/>
<rect x="306.5" y="571.6" width="12.4" height="19.3" fill="#9e1a1a"/>
<path d="M306.5 571.6 L315.4 562.9 L327.8 562.9 L318.9 571.6 Z" fill="#d24444"/>
<path d="M336.6 566.8 L337.2 566.8 L346.1 558.1 L346.1 582.2 L337.2 590.9 L336.6 590.9 Z" fill="#5c0202"/>
<rect x="324.8" y="566.8" width="12.4" height="24.1" fill="#9e1a1a"/>
<path d="M324.8 566.8 L333.7 558.1 L346.1 558.1 L337.2 566.8 Z" fill="#d24444"/>
<path d="M354.9 525.2 L355.5 525.2 L364.4 516.5 L364.4 582.2 L355.5 590.9 L354.9 590.9 Z" fill="#5c0202"/>
<rect x="343.1" y="525.2" width="12.4" height="65.7" fill="#9e1a1a"/>
<path d="M343.1 525.2 L352.0 516.5 L364.4 516.5 L355.5 525.2 Z" fill="#d24444"/>
<path d="M373.2 464.6 L373.8 464.6 L382.7 455.9 L382.7 582.2 L373.8 590.9 L373.2 590.9 Z" fill="#5c0202"/>
<rect x="361.4" y="464.6" width="12.4" height="126.3" fill="#9e1a1a"/>
<path d="M361.4 464.6 L370.3 455.9 L382.7 455.9 L373.8 464.6 Z" fill="#d24444"/>
<path d="M391.5 464.6 L392.1 464.6 L401.0 455.9 L401.0 582.2 L392.1 590.9 L391.5 590.9 Z" fill="#5c0202"/>
<rect x="379.7" y="464.6" width="12.4" height="126.3" fill="#9e1a1a"/>
<path d="M379.7 464.6 L388.6 455.9 L401.0 455.9 L392.1 464.6 Z" fill="#d24444"/>
<path d="M409.7 455.2 L410.3 455.2 L419.2 446.5 L419.2 582.2 L410.3 590.9 L409.7 590.9 Z" fill="#5c0202"/>
<rect x="397.9" y="455.2" width="12.4" height="135.7" fill="#9e1a1a"/>
<path d="M397.9 455.2 L406.8 446.5 L419.2 446.5 L410.3 455.2 Z" fill="#d24444"/>
<path d="M428.0 450.3 L428.6 450.3 L437.5 441.6 L437.5 582.2 L428.6 590.9 L428.0 590.9 Z" fill="#5c0202"/>
<rect x="416.2" y="450.3" width="12.4" height="140.6" fill="#9e1a1a"/>
<path d="M416.2 450.3 L425.1 441.6 L437.5 441.6 L428.6 450.3 Z" fill="#d24444"/>
<path d="M446.3 445.6 L446.9 445.6 L455.8 436.9 L455.8 582.2 L446.9 590.9 L446.3 590.9 Z" fill="#5c0202"/>
<rect x="434.5" y="445.6" width="12.4" height="145.3" fill="#9e1a1a"/>
<path d="M434.5 445.6 L443.4 436.9 L455.8 436.9 L446.9 445.6 Z" fill="#d24444"/>
<path d="M464.6 440.6 L465.2 440.6 L474.1 431.9 L474.1 582.2 L465.2 590.9 L464.6 590.9 Z" fill="#5c0202"/>
<rect x="452.8" y="440.6" width="12.4" height="150.3" fill="#9e1a1a"/>
<path d="M452.8 440.6 L461.7 431.9 L474.1 431.9 L465.2 440.6 Z" fill="#d24444"/>
<path d="M482.9 435.7 L483.5 435.7 L492.4 427.0 L492.4 582.2 L483.5 590.9 L482.9 590.9 Z" fill="#5c0202"/>
<rect x="471.1" y="435.7" width="12.4" height="155.2" fill="#9e1a1a"/>
<path d="M471.1 435.7 L480.0 427.0 L492.4 427.0 L483.5 435.7 Z" fill="#d24444"/>
<path d="M501.1 431.0 L501.7 431.0 L510.6 422.3 L510.6 582.2 L501.7 590.9 L501.1 590.9 Z" fill="#5c0202"/>
<rect x="489.3" y="431.0" width="12.4" height="159.9" fill="#9e1a1a"/>
<path d="M489.3 431.0 L498.2 422.3 L510.6 422.3 L501.7 431.0 Z" fill="#d24444"/>
<rect x="516" y="403.3" width="11" height="11" fill="#d22a38"/>
<text x="530" y="390.3" font-size="10" fill="#444" letter-spacing="-0.18">Оплата</text>
<text x="530" y="401.4" font-size="10" fill="#444" letter-spacing="-0.18">подрядчикам,По</text>
<text x="530" y="412.5" font-size="10" fill="#444" letter-spacing="-0.18">дготовка</text>
<text x="530" y="423.7" font-size="10" fill="#444" letter-spacing="-0.18">проектной</text>
<text x="530" y="434.8" font-size="10" fill="#444" letter-spacing="-0.18">документации,А...</text>
<rect x="516" y="458.9" width="11" height="11" fill="#ffe000"/>
<text x="530" y="445.9" font-size="10" fill="#444" letter-spacing="-0.18">Оплата</text>
<text x="530" y="457.0" font-size="10" fill="#444" letter-spacing="-0.18">подрядчикам,Ст</text>
<text x="530" y="468.1" font-size="10" fill="#444" letter-spacing="-0.18">роительство</text>
<text x="530" y="479.3" font-size="10" fill="#444" letter-spacing="-0.18">торгового</text>
<text x="530" y="490.4" font-size="10" fill="#444" letter-spacing="-0.18">центра,Полиэти...</text>
<rect x="516" y="514.5" width="11" height="11" fill="#22cc22"/>
<text x="530" y="501.5" font-size="10" fill="#444" letter-spacing="-0.18">Оплата</text>
<text x="530" y="512.6" font-size="10" fill="#444" letter-spacing="-0.18">подрядчикам,Ст</text>
<text x="530" y="523.7" font-size="10" fill="#444" letter-spacing="-0.18">роительство</text>
<text x="530" y="534.9" font-size="10" fill="#444" letter-spacing="-0.18">торгового</text>
<text x="530" y="546.0" font-size="10" fill="#444" letter-spacing="-0.18">центра,ПрофМе...</text>
<rect x="516" y="570.1" width="11" height="11" fill="#20b0e8"/>
<text x="530" y="557.1" font-size="10" fill="#444" letter-spacing="-0.18">Оплата</text>
<text x="530" y="568.2" font-size="10" fill="#444" letter-spacing="-0.18">подрядчикам,Ст</text>
<text x="530" y="579.3" font-size="10" fill="#444" letter-spacing="-0.18">роительство</text>
<text x="530" y="590.5" font-size="10" fill="#444" letter-spacing="-0.18">торгового</text>
<text x="530" y="601.6" font-size="10" fill="#444" letter-spacing="-0.18">центра,СтройМ...</text>
<rect x="516" y="625.7" width="11" height="11" fill="#1a1ad0"/>
<text x="530" y="612.7" font-size="10" fill="#444" letter-spacing="-0.18">Оплата</text>
<text x="530" y="623.8" font-size="10" fill="#444" letter-spacing="-0.18">подрядчикам,Ст</text>
<text x="530" y="634.9" font-size="10" fill="#444" letter-spacing="-0.18">роительство</text>
<text x="530" y="646.1" font-size="10" fill="#444" letter-spacing="-0.18">торгового</text>
<text x="530" y="657.2" font-size="10" fill="#444" letter-spacing="-0.18">центра,ЭКИП</text>
<rect x="516" y="681.3" width="11" height="11" fill="#c81af8"/>
<text x="530" y="668.3" font-size="10" fill="#444" letter-spacing="-0.18">Оплата</text>
<text x="530" y="679.4" font-size="10" fill="#444" letter-spacing="-0.18">подрядчикам,Ст</text>
<text x="530" y="690.5" font-size="10" fill="#444" letter-spacing="-0.18">роительство</text>
<text x="530" y="701.7" font-size="10" fill="#444" letter-spacing="-0.18">торгового</text>
</svg><svg width="1348" height="726">
<rect x="658.5" y="378" width="683" height="343.5" fill="#fff" stroke="#b4b4b4"/>
<rect x="811" y="479.5" width="517" height="13.2" fill="#e6ffe6"/>
<rect x="811" y="492.7" width="517" height="37.9" fill="#e6ffe6"/>
<rect x="1069.0" y="530.6" width="82.0" height="12.1" fill="#e6ffe6"/>
<rect x="811" y="542.7" width="517" height="25.9" fill="#e6ffe6"/>
<rect x="1069.0" y="568.6" width="82.0" height="13.3" fill="#e6ffe6"/>
<rect x="1069.0" y="581.9" width="82.0" height="12.9" fill="#e6ffe6"/>
<rect x="1069.0" y="594.8" width="82.0" height="13.0" fill="#e6ffe6"/>
<rect x="1069.0" y="607.8" width="82.0" height="13.2" fill="#e6ffe6"/>
<rect x="1069.0" y="621.0" width="82.0" height="25.1" fill="#e6ffe6"/>
<rect x="811" y="646.1" width="517" height="24.9" fill="#e6ffe6"/>
<rect x="1069.0" y="671.0" width="82.0" height="25.7" fill="#e6ffe6"/>
<line x1="695" y1="493.5" x2="811" y2="493.5" stroke="#e4e4e4"/>
<line x1="811" y1="493.5" x2="1328" y2="493.5" stroke="#eaeafc"/>
<line x1="695" y1="531.5" x2="811" y2="531.5" stroke="#e4e4e4"/>
<line x1="811" y1="531.5" x2="1328" y2="531.5" stroke="#eaeafc"/>
<line x1="695" y1="543.5" x2="811" y2="543.5" stroke="#e4e4e4"/>
<line x1="811" y1="543.5" x2="1328" y2="543.5" stroke="#eaeafc"/>
<line x1="695" y1="569.5" x2="811" y2="569.5" stroke="#e4e4e4"/>
<line x1="811" y1="569.5" x2="1328" y2="569.5" stroke="#eaeafc"/>
<line x1="695" y1="582.5" x2="811" y2="582.5" stroke="#e4e4e4"/>
<line x1="811" y1="582.5" x2="1328" y2="582.5" stroke="#eaeafc"/>
<line x1="695" y1="595.5" x2="811" y2="595.5" stroke="#e4e4e4"/>
<line x1="811" y1="595.5" x2="1328" y2="595.5" stroke="#eaeafc"/>
<line x1="695" y1="608.5" x2="811" y2="608.5" stroke="#e4e4e4"/>
<line x1="811" y1="608.5" x2="1328" y2="608.5" stroke="#eaeafc"/>
<line x1="695" y1="621.5" x2="811" y2="621.5" stroke="#e4e4e4"/>
<line x1="811" y1="621.5" x2="1328" y2="621.5" stroke="#eaeafc"/>
<line x1="695" y1="646.5" x2="811" y2="646.5" stroke="#e4e4e4"/>
<line x1="811" y1="646.5" x2="1328" y2="646.5" stroke="#eaeafc"/>
<line x1="695" y1="671.5" x2="811" y2="671.5" stroke="#e4e4e4"/>
<line x1="811" y1="671.5" x2="1328" y2="671.5" stroke="#eaeafc"/>
<line x1="695" y1="697.5" x2="811" y2="697.5" stroke="#e4e4e4"/>
<line x1="811" y1="697.5" x2="1328" y2="697.5" stroke="#eaeafc"/>
<line x1="822.5" y1="479" x2="822.5" y2="697" stroke="#eaeafc"/>
<line x1="904.5" y1="479" x2="904.5" y2="697" stroke="#eaeafc"/>
<line x1="988.5" y1="479" x2="988.5" y2="697" stroke="#eaeafc"/>
<line x1="1069.5" y1="479" x2="1069.5" y2="697" stroke="#eaeafc"/>
<line x1="1151.5" y1="479" x2="1151.5" y2="697" stroke="#eaeafc"/>
<line x1="1232.5" y1="479" x2="1232.5" y2="697" stroke="#eaeafc"/>
<line x1="1316.5" y1="479" x2="1316.5" y2="697" stroke="#eaeafc"/>
<line x1="694.5" y1="378.5" x2="694.5" y2="707" stroke="#9a9a9a"/>
<line x1="810.5" y1="378.5" x2="810.5" y2="707" stroke="#8a8a8a"/>
<line x1="658.5" y1="402.5" x2="810.5" y2="402.5" stroke="#9a9a9a"/>
<line x1="658.5" y1="479.5" x2="694.5" y2="479.5" stroke="#b8b8b8"/>
<path d="M810.5 385.5 H1106" fill="none" stroke="#9a9a9a"/>
<path d="M1152.5 401 V385.5 H1328" fill="none" stroke="#9a9a9a"/>
<rect x="1106" y="381.5" width="9" height="8.5" rx="2" fill="#fff" stroke="#a8a8a8"/>
<line x1="1108" y1="385.5" x2="1113" y2="385.5" stroke="#555"/>
<rect x="695" y="404" width="113" height="73.5" fill="#92bedd"/>
<rect x="695.5" y="404.5" width="112" height="72.5" fill="none" stroke="#e8f2fa" stroke-width="1"/>
<rect x="811.3" y="403" width="8.2" height="75" fill="#8db4e2"/>
<line x1="811.3" y1="428.5" x2="819.5" y2="428.5" stroke="#b4d0ee" stroke-width="1.5"/>
<rect x="1314" y="403" width="14" height="75" fill="#8db4e2"/>
<line x1="1314" y1="427.5" x2="1328" y2="427.5" stroke="#b4d0ee" stroke-width="1.5"/>
<line x1="1316" y1="403" x2="1316" y2="478" stroke="#a8c4e8" stroke-width="1"/>
<rect x="819.8" y="402.5" width="493.7" height="75.5" fill="#92bedd"/>
<line x1="820.5" y1="402.5" x2="820.5" y2="478" stroke="#fff" stroke-width="1"/>
<text x="861.2" y="416.5" font-size="8.8" font-weight="bold" fill="#fff" text-anchor="middle">Октябрь 2021 г.</text>
<text x="861.2" y="453" font-size="8.7" font-weight="bold" fill="#fff" text-anchor="middle">Значение</text>
<line x1="903.5" y1="402.5" x2="903.5" y2="478" stroke="#fff" stroke-width="1"/>
<text x="944.3" y="416.5" font-size="8.8" font-weight="bold" fill="#fff" text-anchor="middle">Ноябрь 2021 г.</text>
<text x="944.3" y="453" font-size="8.7" font-weight="bold" fill="#fff" text-anchor="middle">Значение</text>
<line x1="986.5" y1="402.5" x2="986.5" y2="478" stroke="#fff" stroke-width="1"/>
<text x="1027.8" y="416.5" font-size="8.8" font-weight="bold" fill="#fff" text-anchor="middle">Декабрь 2021 г.</text>
<text x="1027.8" y="453" font-size="8.7" font-weight="bold" fill="#fff" text-anchor="middle">Значение</text>
<line x1="1070.5" y1="402.5" x2="1070.5" y2="478" stroke="#fff" stroke-width="1"/>
<text x="1109.2" y="417.3" font-size="11.4" font-weight="normal" fill="#fff" text-anchor="middle">2021 г.</text>
<text x="1109.2" y="453" font-size="8.7" font-weight="bold" fill="#fff" text-anchor="middle">Значение</text>
<line x1="1149.5" y1="402.5" x2="1149.5" y2="478" stroke="#fff" stroke-width="1"/>
<text x="1188.7" y="416.5" font-size="8.8" font-weight="bold" fill="#fff" text-anchor="middle">Январь 2022 г.</text>
<text x="1188.7" y="453" font-size="8.7" font-weight="bold" fill="#fff" text-anchor="middle">Значение</text>
<line x1="1228.5" y1="402.5" x2="1228.5" y2="478" stroke="#fff" stroke-width="1"/>
<text x="1271.0" y="416.5" font-size="8.0" font-weight="bold" fill="#fff" text-anchor="middle">Февраль 2022 г.</text>
<text x="1271.0" y="453" font-size="8.7" font-weight="bold" fill="#fff" text-anchor="middle">Значение</text>
<line x1="819.8" y1="423.5" x2="1313.5" y2="423.5" stroke="#fff" stroke-width="1"/>
<line x1="819.8" y1="477.5" x2="1313.5" y2="477.5" stroke="#eef4fa" stroke-width="1"/>
<line x1="811.3" y1="479" x2="1328" y2="479" stroke="#93b6dc" stroke-width="1.2"/>
<line x1="1313.5" y1="402.5" x2="1313.5" y2="478" stroke="#fff" stroke-width="1"/>
<line x1="810.5" y1="378.5" x2="810.5" y2="707" stroke="#8a8a8a"/>
<text x="751.5" y="444" font-size="8.6" font-weight="bold" fill="#fff" text-anchor="middle">Сводная таблица</text>
<rect x="815.5" y="417" width="1.5" height="1.5" fill="#e8f0fa"/>
<text transform="translate(697.0,489.5) scale(0.893,1)" font-size="10.70" font-weight="bold" fill="#3c3c3c" text-anchor="start">Оплата подрядчикам</text>
<g clip-path="url(#cpp)">
<text transform="translate(820.5,489.5) scale(0.885,1)" font-size="10.50" font-weight="bold" fill="#3c3c3c" text-anchor="end">000</text>
</g>
<text transform="translate(901.8,489.5) scale(0.885,1)" font-size="10.50" font-weight="bold" fill="#3c3c3c" text-anchor="end" word-spacing="-0.4">5 400 000</text>
<text transform="translate(985.3,489.5) scale(0.885,1)" font-size="10.50" font-weight="bold" fill="#3c3c3c" text-anchor="end" word-spacing="-0.4">5 400 000</text>
<text transform="translate(1066.8,489.5) scale(0.885,1)" font-size="10.50" font-weight="bold" fill="#3c3c3c" text-anchor="end" word-spacing="-0.4">5 400 000</text>
<text transform="translate(1148.8,489.5) scale(0.885,1)" font-size="10.50" font-weight="bold" fill="#3c3c3c" text-anchor="end" word-spacing="-0.4">59 000 000</text>
<text transform="translate(1230.3,489.5) scale(0.885,1)" font-size="10.50" font-weight="bold" fill="#3c3c3c" text-anchor="end" word-spacing="-0.4">0</text>
<text transform="translate(1313.3,489.5) scale(0.885,1)" font-size="10.50" font-weight="bold" fill="#3c3c3c" text-anchor="end" word-spacing="-0.4">0</text>
<text transform="translate(709.2,502.7) scale(0.893,1)" font-size="10.70" font-weight="bold" fill="#3c3c3c" text-anchor="start">Подготовка</text>
<text transform="translate(709.2,515.0) scale(0.893,1)" font-size="10.70" font-weight="bold" fill="#3c3c3c" text-anchor="start">проектной</text>
<text transform="translate(709.2,527.3) scale(0.893,1)" font-size="10.70" font-weight="bold" fill="#3c3c3c" text-anchor="start">документации</text>
<text transform="translate(814.0,502.7) scale(0.885,1)" font-size="10.50" font-weight="bold" fill="#3c3c3c" text-anchor="start">0</text>
<text transform="translate(901.8,502.7) scale(0.885,1)" font-size="10.50" font-weight="bold" fill="#3c3c3c" text-anchor="end" word-spacing="-0.4">0</text>
<text transform="translate(985.3,502.7) scale(0.885,1)" font-size="10.50" font-weight="bold" fill="#3c3c3c" text-anchor="end" word-spacing="-0.4">0</text>
<text transform="translate(1066.8,502.7) scale(0.885,1)" font-size="10.50" font-weight="bold" fill="#3c3c3c" text-anchor="end" word-spacing="-0.4">0</text>
<text transform="translate(1148.8,502.7) scale(0.885,1)" font-size="10.50" font-weight="bold" fill="#3c3c3c" text-anchor="end" word-spacing="-0.4">5 000 000</text>
<text transform="translate(1230.3,502.7) scale(0.885,1)" font-size="10.50" font-weight="bold" fill="#3c3c3c" text-anchor="end" word-spacing="-0.4">0</text>
<text transform="translate(1313.3,502.7) scale(0.885,1)" font-size="10.50" font-weight="bold" fill="#3c3c3c" text-anchor="end" word-spacing="-0.4">0</text>
<text transform="translate(721.4,540.6) scale(0.908,1)" font-size="10.90" font-weight="normal" fill="#5a5a5a" text-anchor="start">АйтиСервис</text>
<text transform="translate(814.0,540.6) scale(0.885,1)" font-size="10.50" font-weight="normal" fill="#5a5a5a" text-anchor="start">0</text>
<text transform="translate(901.8,540.6) scale(0.885,1)" font-size="10.50" font-weight="normal" fill="#5a5a5a" text-anchor="end" word-spacing="-0.4">0</text>
<text transform="translate(985.3,540.6) scale(0.885,1)" font-size="10.50" font-weight="normal" fill="#5a5a5a" text-anchor="end" word-spacing="-0.4">0</text>
<text transform="translate(1066.8,540.6) scale(0.885,1)" font-size="10.50" font-weight="normal" fill="#5a5a5a" text-anchor="end" word-spacing="-0.4">0</text>
<text transform="translate(1148.8,540.6) scale(0.885,1)" font-size="10.50" font-weight="bold" fill="#3c3c3c" text-anchor="end" word-spacing="-0.4">5 000 000</text>
<text transform="translate(1230.3,540.6) scale(0.885,1)" font-size="10.50" font-weight="normal" fill="#5a5a5a" text-anchor="end" word-spacing="-0.4">0</text>
<text transform="translate(1313.3,540.6) scale(0.885,1)" font-size="10.50" font-weight="normal" fill="#5a5a5a" text-anchor="end" word-spacing="-0.4">0</text>
<text transform="translate(709.2,552.7) scale(0.893,1)" font-size="10.70" font-weight="bold" fill="#3c3c3c" text-anchor="start">Строительство</text>
<text transform="translate(709.2,565.0) scale(0.893,1)" font-size="10.70" font-weight="bold" fill="#3c3c3c" text-anchor="start">торгового центра</text>
<g clip-path="url(#cpp)">
<text transform="translate(820.5,552.7) scale(0.885,1)" font-size="10.50" font-weight="bold" fill="#3c3c3c" text-anchor="end">000</text>
</g>
<text transform="translate(901.8,552.7) scale(0.885,1)" font-size="10.50" font-weight="bold" fill="#3c3c3c" text-anchor="end" word-spacing="-0.4">5 400 000</text>
<text transform="translate(985.3,552.7) scale(0.885,1)" font-size="10.50" font-weight="bold" fill="#3c3c3c" text-anchor="end" word-spacing="-0.4">5 400 000</text>
<text transform="translate(1066.8,552.7) scale(0.885,1)" font-size="10.50" font-weight="bold" fill="#3c3c3c" text-anchor="end" word-spacing="-0.4">5 400 000</text>
<text transform="translate(1148.8,552.7) scale(0.885,1)" font-size="10.50" font-weight="bold" fill="#3c3c3c" text-anchor="end" word-spacing="-0.4">54 000 000</text>
<text transform="translate(1230.3,552.7) scale(0.885,1)" font-size="10.50" font-weight="bold" fill="#3c3c3c" text-anchor="end" word-spacing="-0.4">0</text>
<text transform="translate(1313.3,552.7) scale(0.885,1)" font-size="10.50" font-weight="bold" fill="#3c3c3c" text-anchor="end" word-spacing="-0.4">0</text>
<text transform="translate(721.4,578.6) scale(0.908,1)" font-size="10.90" font-weight="normal" fill="#5a5a5a" text-anchor="start">Полиэтилен</text>
<g clip-path="url(#cpp)">
<text transform="translate(820.5,578.6) scale(0.885,1)" font-size="10.50" font-weight="normal" fill="#5a5a5a" text-anchor="end">000</text>
</g>
<text transform="translate(901.8,578.6) scale(0.885,1)" font-size="10.50" font-weight="normal" fill="#5a5a5a" text-anchor="end" word-spacing="-0.4">1 000 000</text>
<text transform="translate(985.3,578.6) scale(0.885,1)" font-size="10.50" font-weight="normal" fill="#5a5a5a" text-anchor="end" word-spacing="-0.4">1 000 000</text>
<text transform="translate(1066.8,578.6) scale(0.885,1)" font-size="10.50" font-weight="normal" fill="#5a5a5a" text-anchor="end" word-spacing="-0.4">1 000 000</text>
<text transform="translate(1148.8,578.6) scale(0.885,1)" font-size="10.50" font-weight="bold" fill="#3c3c3c" text-anchor="end" word-spacing="-0.4">10 000 000</text>
<text transform="translate(1230.3,578.6) scale(0.885,1)" font-size="10.50" font-weight="normal" fill="#5a5a5a" text-anchor="end" word-spacing="-0.4">0</text>
<text transform="translate(1313.3,578.6) scale(0.885,1)" font-size="10.50" font-weight="normal" fill="#5a5a5a" text-anchor="end" word-spacing="-0.4">0</text>
<text transform="translate(721.4,591.9) scale(0.908,1)" font-size="10.90" font-weight="normal" fill="#5a5a5a" text-anchor="start">ПрофМебель</text>
<g clip-path="url(#cpp)">
<text transform="translate(820.5,591.9) scale(0.885,1)" font-size="10.50" font-weight="normal" fill="#5a5a5a" text-anchor="end">000</text>
</g>
<text transform="translate(901.8,591.9) scale(0.885,1)" font-size="10.50" font-weight="normal" fill="#5a5a5a" text-anchor="end" word-spacing="-0.4">500 000</text>
<text transform="translate(985.3,591.9) scale(0.885,1)" font-size="10.50" font-weight="normal" fill="#5a5a5a" text-anchor="end" word-spacing="-0.4">500 000</text>
<text transform="translate(1066.8,591.9) scale(0.885,1)" font-size="10.50" font-weight="normal" fill="#5a5a5a" text-anchor="end" word-spacing="-0.4">500 000</text>
<text transform="translate(1148.8,591.9) scale(0.885,1)" font-size="10.50" font-weight="bold" fill="#3c3c3c" text-anchor="end" word-spacing="-0.4">5 000 000</text>
<text transform="translate(1230.3,591.9) scale(0.885,1)" font-size="10.50" font-weight="normal" fill="#5a5a5a" text-anchor="end" word-spacing="-0.4">0</text>
<text transform="translate(1313.3,591.9) scale(0.885,1)" font-size="10.50" font-weight="normal" fill="#5a5a5a" text-anchor="end" word-spacing="-0.4">0</text>
<text transform="translate(721.4,604.8) scale(0.908,1)" font-size="10.90" font-weight="normal" fill="#5a5a5a" text-anchor="start">СтройМонтаж</text>
<g clip-path="url(#cpp)">
<text transform="translate(820.5,604.8) scale(0.885,1)" font-size="10.50" font-weight="normal" fill="#5a5a5a" text-anchor="end">000</text>
</g>
<text transform="translate(901.8,604.8) scale(0.885,1)" font-size="10.50" font-weight="normal" fill="#5a5a5a" text-anchor="end" word-spacing="-0.4">600 000</text>
<text transform="translate(985.3,604.8) scale(0.885,1)" font-size="10.50" font-weight="normal" fill="#5a5a5a" text-anchor="end" word-spacing="-0.4">600 000</text>
<text transform="translate(1066.8,604.8) scale(0.885,1)" font-size="10.50" font-weight="normal" fill="#5a5a5a" text-anchor="end" word-spacing="-0.4">600 000</text>
<text transform="translate(1148.8,604.8) scale(0.885,1)" font-size="10.50" font-weight="bold" fill="#3c3c3c" text-anchor="end" word-spacing="-0.4">6 000 000</text>
<text transform="translate(1230.3,604.8) scale(0.885,1)" font-size="10.50" font-weight="normal" fill="#5a5a5a" text-anchor="end" word-spacing="-0.4">0</text>
<text transform="translate(1313.3,604.8) scale(0.885,1)" font-size="10.50" font-weight="normal" fill="#5a5a5a" text-anchor="end" word-spacing="-0.4">0</text>
<text transform="translate(721.4,617.8) scale(0.908,1)" font-size="10.90" font-weight="normal" fill="#5a5a5a" text-anchor="start">ЭКИП</text>
<g clip-path="url(#cpp)">
<text transform="translate(820.5,617.8) scale(0.885,1)" font-size="10.50" font-weight="normal" fill="#5a5a5a" text-anchor="end">000</text>
</g>
<text transform="translate(901.8,617.8) scale(0.885,1)" font-size="10.50" font-weight="normal" fill="#5a5a5a" text-anchor="end" word-spacing="-0.4">800 000</text>
<text transform="translate(985.3,617.8) scale(0.885,1)" font-size="10.50" font-weight="normal" fill="#5a5a5a" text-anchor="end" word-spacing="-0.4">800 000</text>
<text transform="translate(1066.8,617.8) scale(0.885,1)" font-size="10.50" font-weight="normal" fill="#5a5a5a" text-anchor="end" word-spacing="-0.4">800 000</text>
<text transform="translate(1148.8,617.8) scale(0.885,1)" font-size="10.50" font-weight="bold" fill="#3c3c3c" text-anchor="end" word-spacing="-0.4">8 000 000</text>
<text transform="translate(1230.3,617.8) scale(0.885,1)" font-size="10.50" font-weight="normal" fill="#5a5a5a" text-anchor="end" word-spacing="-0.4">0</text>
<text transform="translate(1313.3,617.8) scale(0.885,1)" font-size="10.50" font-weight="normal" fill="#5a5a5a" text-anchor="end" word-spacing="-0.4">0</text>
<text transform="translate(721.4,631.0) scale(0.908,1)" font-size="10.90" font-weight="normal" fill="#5a5a5a" text-anchor="start">Энерготехресурс,</text>
<text transform="translate(721.4,643.3) scale(0.908,1)" font-size="10.90" font-weight="normal" fill="#5a5a5a" text-anchor="start">ООО</text>
<g clip-path="url(#cpp)">
<text transform="translate(820.5,631.0) scale(0.885,1)" font-size="10.50" font-weight="normal" fill="#5a5a5a" text-anchor="end">000</text>
</g>
<text transform="translate(901.8,631.0) scale(0.885,1)" font-size="10.50" font-weight="normal" fill="#5a5a5a" text-anchor="end" word-spacing="-0.4">2 500 000</text>
<text transform="translate(985.3,631.0) scale(0.885,1)" font-size="10.50" font-weight="normal" fill="#5a5a5a" text-anchor="end" word-spacing="-0.4">2 500 000</text>
<text transform="translate(1066.8,631.0) scale(0.885,1)" font-size="10.50" font-weight="normal" fill="#5a5a5a" text-anchor="end" word-spacing="-0.4">2 500 000</text>
<text transform="translate(1148.8,631.0) scale(0.885,1)" font-size="10.50" font-weight="bold" fill="#3c3c3c" text-anchor="end" word-spacing="-0.4">25 000 000</text>
<text transform="translate(1230.3,631.0) scale(0.885,1)" font-size="10.50" font-weight="normal" fill="#5a5a5a" text-anchor="end" word-spacing="-0.4">0</text>
<text transform="translate(1313.3,631.0) scale(0.885,1)" font-size="10.50" font-weight="normal" fill="#5a5a5a" text-anchor="end" word-spacing="-0.4">0</text>
<text transform="translate(697.0,656.1) scale(0.893,1)" font-size="10.70" font-weight="bold" fill="#3c3c3c" text-anchor="start">Поступления от</text>
<text transform="translate(697.0,668.4) scale(0.893,1)" font-size="10.70" font-weight="bold" fill="#3c3c3c" text-anchor="start">аренды площадей</text>
<text transform="translate(814.0,656.1) scale(0.885,1)" font-size="10.50" font-weight="bold" fill="#3c3c3c" text-anchor="start">0</text>
<text transform="translate(901.8,656.1) scale(0.885,1)" font-size="10.50" font-weight="bold" fill="#3c3c3c" text-anchor="end" word-spacing="-0.4">0</text>
<text transform="translate(985.3,656.1) scale(0.885,1)" font-size="10.50" font-weight="bold" fill="#3c3c3c" text-anchor="end" word-spacing="-0.4">0</text>
<text transform="translate(1066.8,656.1) scale(0.885,1)" font-size="10.50" font-weight="bold" fill="#3c3c3c" text-anchor="end" word-spacing="-0.4">0</text>
<text transform="translate(1148.8,656.1) scale(0.885,1)" font-size="10.50" font-weight="bold" fill="#3c3c3c" text-anchor="end" word-spacing="-0.4">0</text>
<text transform="translate(1230.3,656.1) scale(0.885,1)" font-size="10.50" font-weight="bold" fill="#3c3c3c" text-anchor="end" word-spacing="-0.4">1 500 000</text>
<text transform="translate(1313.3,656.1) scale(0.885,1)" font-size="10.50" font-weight="bold" fill="#3c3c3c" text-anchor="end" word-spacing="-0.4">2 000 000</text>
<text transform="translate(709.2,681.0) scale(0.893,1)" font-size="10.70" font-weight="bold" fill="#3c3c3c" text-anchor="start">Эксплуатация ТЦ</text>
<text transform="translate(709.2,693.3) scale(0.893,1)" font-size="10.70" font-weight="bold" fill="#3c3c3c" text-anchor="start">"Дюна"</text>
<text transform="translate(814.0,681.0) scale(0.885,1)" font-size="10.50" font-weight="bold" fill="#3c3c3c" text-anchor="start">0</text>
<text transform="translate(901.8,681.0) scale(0.885,1)" font-size="10.50" font-weight="bold" fill="#3c3c3c" text-anchor="end" word-spacing="-0.4">0</text>
<text transform="translate(985.3,681.0) scale(0.885,1)" font-size="10.50" font-weight="bold" fill="#3c3c3c" text-anchor="end" word-spacing="-0.4">0</text>
<text transform="translate(1066.8,681.0) scale(0.885,1)" font-size="10.50" font-weight="bold" fill="#3c3c3c" text-anchor="end" word-spacing="-0.4">0</text>
<text transform="translate(1148.8,681.0) scale(0.885,1)" font-size="10.50" font-weight="bold" fill="#3c3c3c" text-anchor="end" word-spacing="-0.4">0</text>
<text transform="translate(1230.3,681.0) scale(0.885,1)" font-size="10.50" font-weight="bold" fill="#3c3c3c" text-anchor="end" word-spacing="-0.4">1 500 000</text>
<text transform="translate(1313.3,681.0) scale(0.885,1)" font-size="10.50" font-weight="bold" fill="#3c3c3c" text-anchor="end" word-spacing="-0.4">2 000 000</text>
<defs><clipPath id="cpp"><rect x="811.5" y="470" width="12" height="240"/></clipPath></defs>
<path d="M665.5 492 V645.5 H694.5" fill="none" stroke="#8c8c8c"/>
<path d="M677.5 517 V543.5 H694.5" fill="none" stroke="#8c8c8c"/>
<path d="M677.5 561 V645.5" fill="none" stroke="#8c8c8c"/>
<path d="M665.5 664.5 V696.5 H694.5" fill="none" stroke="#8c8c8c"/>
<rect x="661.5" y="482.5" width="8" height="9" rx="2" fill="#fff" stroke="#9a9a9a"/>
<line x1="663.3" y1="487.0" x2="667.7" y2="487.0" stroke="#666"/>
<rect x="673.5" y="507.5" width="8" height="9" rx="2" fill="#fff" stroke="#9a9a9a"/>
<line x1="675.3" y1="512.0" x2="679.7" y2="512.0" stroke="#666"/>
<rect x="673.5" y="551.5" width="8" height="9" rx="2" fill="#fff" stroke="#9a9a9a"/>
<line x1="675.3" y1="556.0" x2="679.7" y2="556.0" stroke="#666"/>
<rect x="661.5" y="655.5" width="8" height="9" rx="2" fill="#fff" stroke="#9a9a9a"/>
<line x1="663.3" y1="660.0" x2="667.7" y2="660.0" stroke="#666"/>
<rect x="1332.5" y="402" width="6" height="290" rx="3" fill="#e0e0e0"/>
<rect x="1332.5" y="399" width="6" height="288" rx="3" fill="#8e8e8e"/>
<path d="M1332.5 389 L1335.5 385 L1338.5 389 Z" fill="#c4c4c4"/>
<path d="M1333 697.5 L1338.6 697.5 L1335.8 701 Z" fill="#222"/>
<rect x="678" y="711.5" width="631" height="6" rx="3" fill="#dcdcdc"/>
<rect x="821" y="711.5" width="179" height="6" rx="3" fill="#8e8e8e"/>
<path d="M670.5 711.7 V717.3 L666.8 714.5 Z" fill="#222"/>
<path d="M1317.5 711.7 V717.3 L1321.2 714.5 Z" fill="#222"/>
</svg>
</body></html>
